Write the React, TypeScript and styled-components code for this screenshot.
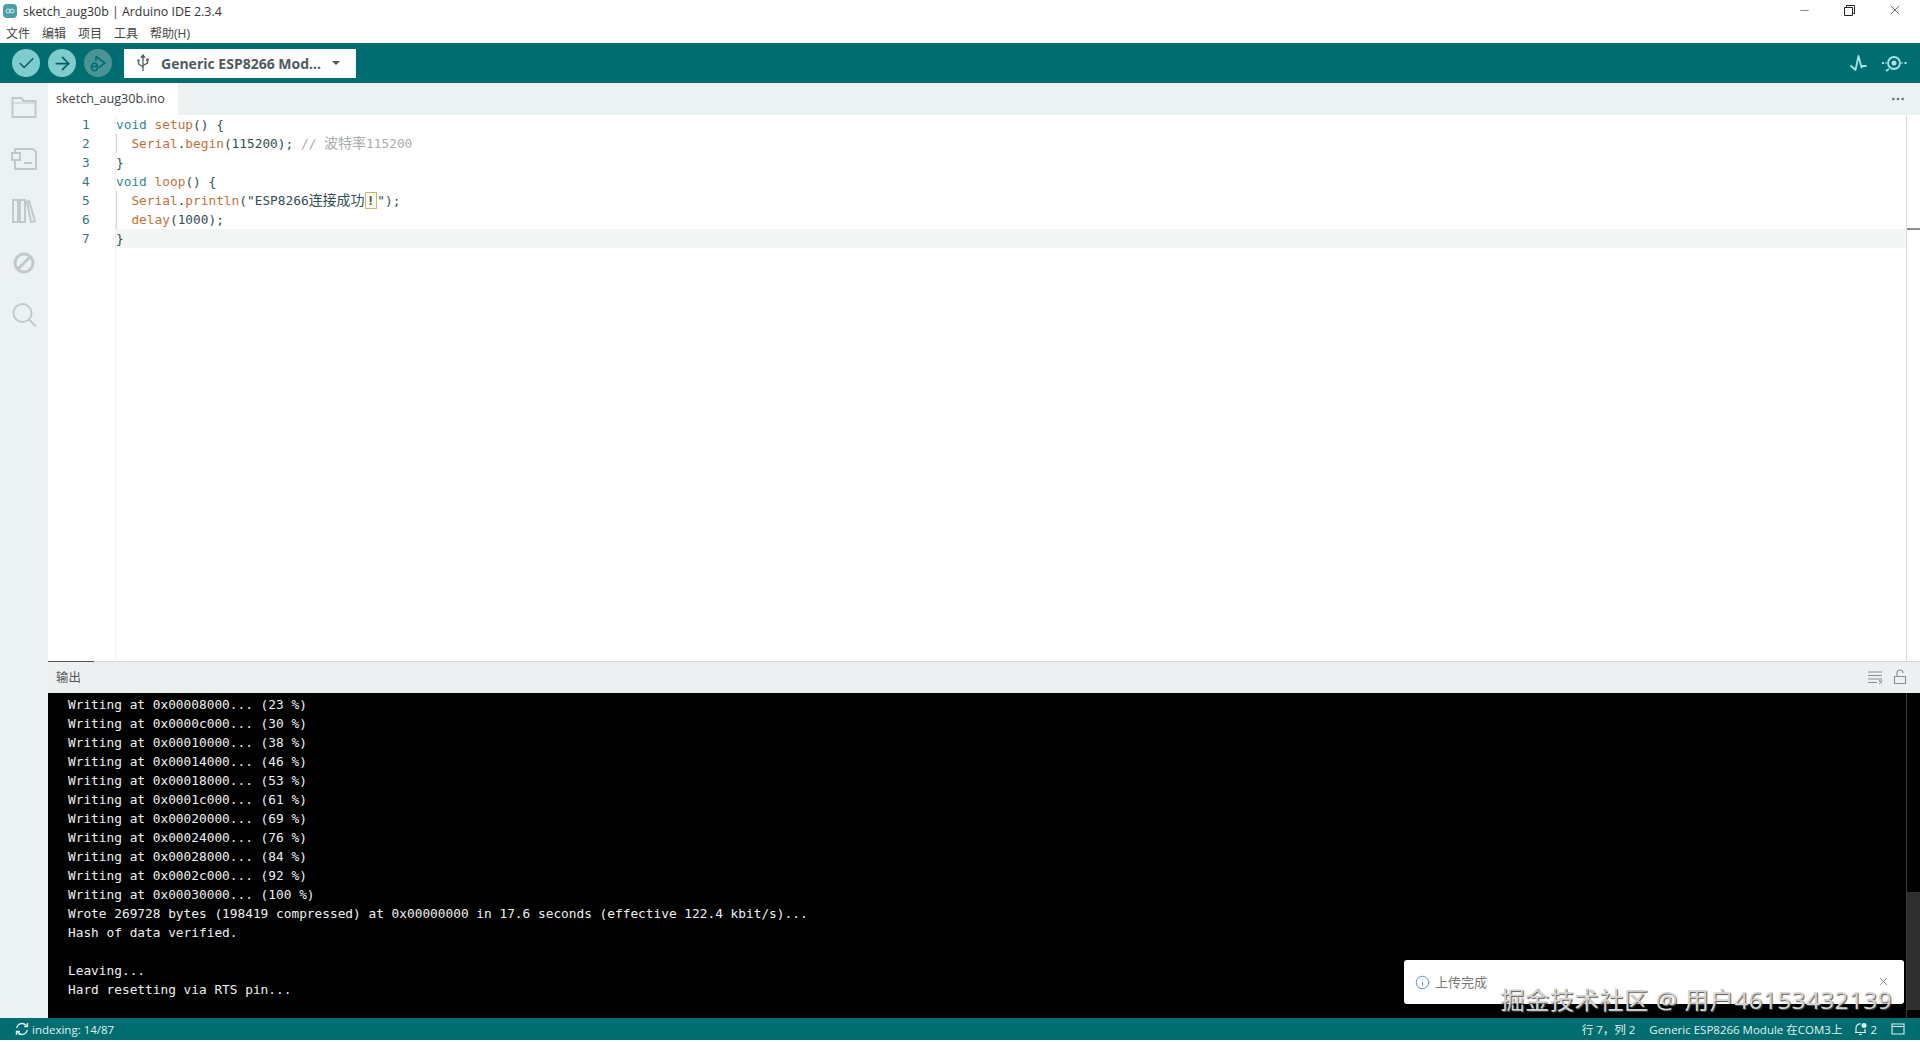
import { createGlobalStyle, styled } from "styled-components";
import { Check, ArrowRight, Ellipsis, Minus, X, Info } from "lucide-react";

const mono = `"DejaVu Sans Mono", "Noto Sans CJK SC", monospace`;
const sans = `"Open Sans", "Noto Sans CJK SC", sans-serif`;

const GlobalStyle = createGlobalStyle`
  html, body {
    margin: 0;
    padding: 0;
    height: 100%;
    background: #fff;
    overflow: hidden;
  }
  #root { height: 100%; }
`;

const Page = styled.div`
  width: 1920px;
  height: 1042px;
  display: flex;
  flex-direction: column;
  font-family: ${sans};
  color: #2b2b2b;
  background: #fff;
`;

const TitleBar = styled.div`
  height: 22px;
  display: flex;
  align-items: center;
  padding-left: 3px;
  font-size: 12.4px;
  color: #333;
`;

const AppIcon = styled.span`
  width: 14px;
  height: 14px;
  border-radius: 4px;
  background: #4d9ea3;
  margin-right: 6px;
  display: flex;
  align-items: center;
  justify-content: center;
`;

const TitleText = styled.span`
  flex: 1;
`;

const WindowButtons = styled.div`
  display: flex;
  align-items: center;
  margin-top: -2px;
  padding-right: 3px;
`;

const WindowButton = styled.span`
  width: 45px;
  height: 20px;
  display: flex;
  align-items: center;
  justify-content: center;
  color: #222;
`;

const MenuBar = styled.div`
  height: 21px;
  display: flex;
  align-items: center;
  gap: 12px;
  padding-left: 6px;
  font-size: 12px;
  color: #444;
`;

const Toolbar = styled.div`
  height: 40px;
  background: #006d70;
  display: flex;
  align-items: center;
  padding-left: 12px;
`;

const RoundButton = styled.span<{ $dim?: boolean }>`
  width: 28px;
  height: 28px;
  border-radius: 50%;
  margin-right: 8px;
  background: ${(p) => (p.$dim ? "#4a9397" : "#7fcbcd")};
  color: ${(p) => (p.$dim ? "#006d70" : "#075e61")};
  display: flex;
  align-items: center;
  justify-content: center;
`;

const BoardSelect = styled.div`
  width: 232px;
  height: 29px;
  margin-left: 4px;
  background: #fff;
  display: flex;
  align-items: center;
  padding-left: 12px;
  box-sizing: border-box;
  color: #4e5b61;
  font-size: 14px;
  font-weight: 700;
`;

const BoardName = styled.span`
  margin-left: 11px;
  width: 171px;
  white-space: nowrap;
`;

const Caret = styled.span`
  width: 0;
  height: 0;
  border-left: 4px solid transparent;
  border-right: 4px solid transparent;
  border-top: 4px solid #4e5b61;
`;

const ToolbarEnd = styled.div`
  margin-left: auto;
  display: flex;
  align-items: center;
  gap: 12px;
  padding-right: 13px;
  color: #a6e4e6;
`;

const Workspace = styled.div`
  flex: 1;
  display: flex;
  min-height: 0;
`;

const SideBar = styled.div`
  width: 48px;
  background: #ecf1f1;
  display: flex;
  flex-direction: column;
  align-items: center;
  gap: 28px;
  padding-top: 12px;
  box-sizing: border-box;
  color: #c3c9c9;

  svg {
    display: block;
    height: 24px;
  }
`;

const Main = styled.div`
  flex: 1;
  min-width: 0;
  display: flex;
  flex-direction: column;
`;

const TabStrip = styled.div`
  height: 32px;
  background: #ecf1f1;
  display: flex;
  align-items: stretch;
  justify-content: space-between;
`;

const Tab = styled.div`
  width: 130px;
  padding: 0 0 2px 8px;
  box-sizing: border-box;
  background: #fff;
  display: flex;
  align-items: center;
  font-size: 12.6px;
  color: #3a3f42;
`;

const TabMore = styled.span`
  display: flex;
  align-items: center;
  padding-right: 14px;
  color: #6b7173;
`;

const Editor = styled.div`
  height: 546px;
  position: relative;
  display: flex;
  font-family: ${mono};
  font-size: 12.8px;
  line-height: 19px;
`;

const Gutter = styled.div`
  width: 67px;
  flex: none;
  border-right: 1px solid #eef1f1;
`;

const LineNo = styled.div`
  height: 19px;
  padding-left: 34px;
  color: #39757a;
  white-space: pre;
`;

const Code = styled.div`
  flex: 1;
  min-width: 0;
`;

const CodeLine = styled.div<{ $current?: boolean }>`
  height: 19px;
  white-space: pre;
  color: #2f4f52;
  background: ${(p) => (p.$current ? "#f4f6f6" : "transparent")};
`;

const Indent = styled.span`
  display: inline-block;
  width: 15.4px;
  height: 19px;
  vertical-align: top;
  box-shadow: inset 1px 0 0 #d5d9d9;
`;

const Kw = styled.span`
  color: #2f8a90;
`;
const Fn = styled.span`
  color: #c2703a;
`;
const Comment = styled.span`
  color: #a8acac;
`;
const Cjk = styled.span`
  font-size: 14px;
`;
const Bracket = styled.span`
  display: inline-block;
  height: 17px;
  line-height: 17px;
  box-shadow: inset 0 0 0 1px #c9b86a;
  background: #fbfbef;
  padding: 0 3px 0 2px;
  font-weight: 700;
`;

const Ruler = styled.div`
  width: 13px;
  flex: none;
  border-left: 1px solid #d8dbdb;
  position: relative;
`;

const RulerMark = styled.span`
  position: absolute;
  top: 113px;
  left: 0;
  right: 0;
  height: 2px;
  background: #8b8f90;
`;

const OutputHead = styled.div`
  height: 32px;
  box-sizing: border-box;
  border-top: 1px solid #d3d6d6;
  background: #ecf0f1;
  display: flex;
  align-items: center;
  justify-content: space-between;
  padding: 0 13px 2px 8px;
  font-size: 12.4px;
  color: #555;
  position: relative;
`;

const OutputMark = styled.span`
  position: absolute;
  top: -1px;
  left: 0;
  width: 46px;
  height: 1px;
  background: #555;
`;

const OutputTools = styled.div`
  display: flex;
  align-items: center;
  gap: 10px;
  color: #8a8e8e;
`;

const Console = styled.div`
  height: 325px;
  position: relative;
  background: #000;
  color: #f0f0f0;
  font-family: ${mono};
  font-size: 12.8px;
  line-height: 19px;
  padding: 2px 0 0 20px;
  box-sizing: border-box;
  white-space: pre;
`;

const ConsoleRule = styled.span`
  position: absolute;
  top: 0;
  right: 13px;
  bottom: 0;
  width: 1px;
  background: #3a3a3a;
`;

const ConsoleThumb = styled.span`
  position: absolute;
  right: 0;
  width: 13px;
  top: 199px;
  height: 118px;
  background: #2f2f2f;
`;

const Toast = styled.div`
  position: absolute;
  right: 16px;
  top: 267px;
  width: 500px;
  height: 44px;
  border-radius: 3px;
  background: #fff;
  display: flex;
  align-items: center;
  padding: 0 14px 0 11px;
  box-sizing: border-box;
  font-family: ${sans};
  font-size: 13px;
  color: #777;
`;

const ToastText = styled.span`
  flex: 1;
  margin-left: 5px;
`;

const ToastClose = styled.span`
  display: flex;
  margin-bottom: 2px;
  color: #555;
`;

const Watermark = styled.span`
  position: absolute;
  right: 28px;
  top: 291px;
  font-family: ${sans};
  font-size: 24.4px;
  line-height: 32px;
  color: #d4d4d4;
  text-shadow: 1px 1px 1px #555;
  letter-spacing: 0.4px;
`;

const StatusBar = styled.div`
  height: 22px;
  background: #006d70;
  color: #e4f0f0;
  display: flex;
  align-items: center;
  font-size: 11.5px;
  margin-bottom: 2px;
  padding: 0 15px 0 15px;
`;

const StatusLeft = styled.span`
  flex: 1;
  display: flex;
  align-items: center;
  gap: 3px;
`;

const StatusItem = styled.span`
  display: flex;
  align-items: center;
  gap: 3px;
  margin-left: 14px;
`;

const BellItem = styled(StatusItem)`
  margin-left: 12px;
`;

const lines = [
  "Writing at 0x00008000... (23 %)",
  "Writing at 0x0000c000... (30 %)",
  "Writing at 0x00010000... (38 %)",
  "Writing at 0x00014000... (46 %)",
  "Writing at 0x00018000... (53 %)",
  "Writing at 0x0001c000... (61 %)",
  "Writing at 0x00020000... (69 %)",
  "Writing at 0x00024000... (76 %)",
  "Writing at 0x00028000... (84 %)",
  "Writing at 0x0002c000... (92 %)",
  "Writing at 0x00030000... (100 %)",
  "Wrote 269728 bytes (198419 compressed) at 0x00000000 in 17.6 seconds (effective 122.4 kbit/s)...",
  "Hash of data verified.",
  " ",
  "Leaving...",
  "Hard resetting via RTS pin...",
];

function FolderIcon() {
  return (
    <svg width="26" height="24" viewBox="0 0 26 24" fill="none" stroke="currentColor" strokeWidth="2">
      <path d="M1.500 3h9l2 3h12v16h-23z" />
      <path d="M1.500 8h23" strokeWidth="1" />
    </svg>
  );
}

function BoardIcon() {
  return (
    <svg width="26" height="24" viewBox="0 0 26 24" fill="none" stroke="currentColor" strokeWidth="2">
      <path d="M4 6V2h18l3 3v17H4v-9" />
      <path d="M1 6h8v7H1z" />
      <path d="M13 16h8" />
    </svg>
  );
}

function LibraryIcon() {
  return (
    <svg width="26" height="24" viewBox="0 0 26 24" fill="none" stroke="currentColor" strokeWidth="2">
      <path d="M2 1h5v22H2zM9 1h5v22H9zM16 3l2-1 6 20-4 1z" />
    </svg>
  );
}

function NoEntryIcon() {
  return (
    <svg width="24" height="24" viewBox="0 0 24 24" fill="none" stroke="currentColor" strokeWidth="3">
      <circle cx="12" cy="12" r="9" />
      <path d="M6 18 18 6" />
    </svg>
  );
}

function SearchIcon() {
  return (
    <svg width="25" height="24" viewBox="0 0 25 24" fill="none" stroke="currentColor" strokeWidth="2">
      <circle cx="10.500" cy="10" r="9" />
      <path d="m17 16.500 7 7" />
    </svg>
  );
}

function UsbIcon() {
  return (
    <svg width="14" height="18" viewBox="0 0 14 18" fill="none" stroke="currentColor" strokeWidth="1.300">
      <path d="M7 1v16" />
      <path d="M5.500 3 7 1l1.500 2z" fill="currentColor" />
      <path d="M7 13 2.500 10V7.500M7 11.500l4.500-2.500V6.500" />
      <circle cx="2.500" cy="6.500" r="1.200" fill="currentColor" stroke="none" />
      <path d="M10.300 4.500h2.400v2.400h-2.400z" fill="currentColor" stroke="none" />
    </svg>
  );
}

function DebugIcon() {
  return (
    <svg width="22" height="22" viewBox="0 0 22 22" fill="none" stroke="currentColor" strokeWidth="1.600">
      <path d="M9 4.500 18 11l-6 4.500" />
      <path d="M9 4.500V9" />
      <ellipse cx="7.500" cy="15" rx="3" ry="3.800" />
      <path d="M4.500 14.500h6" />
    </svg>
  );
}

function PlotterIcon() {
  return (
    <svg width="20" height="20" viewBox="0 0 20 20" fill="none" stroke="currentColor" strokeWidth="1.800" strokeLinejoin="round">
      <path d="M1.500 12.500 6.500 17l3-14 3 11.500 1-1.500h4" />
    </svg>
  );
}

function MonitorIcon() {
  return (
    <svg width="26" height="20" viewBox="0 0 26 20" fill="none" stroke="currentColor" strokeWidth="1.800">
      <circle cx="13" cy="10" r="6" />
      <circle cx="13" cy="10" r="1.600" fill="currentColor" />
      <path d="M8 16 5 18" />
      <path d="M1 10h2M4.500 10h1M20.500 10h1M23.500 10h2" strokeDasharray="2 2" />
    </svg>
  );
}

function ClearIcon() {
  return (
    <svg width="16" height="14" viewBox="0 0 16 14" fill="none" stroke="currentColor" strokeWidth="1.100">
      <path d="M1 2h14M1 5.500h14M1 9h14M1 12.500h9M12 10.500l3 3M15 10.500l-3 3" />
    </svg>
  );
}

function LockIcon() {
  return (
    <svg width="14" height="16" viewBox="0 0 14 16" fill="none" stroke="currentColor" strokeWidth="1.100">
      <path d="M1.500 7.500h11v7h-11z" />
      <path d="M4 7.500V4a3 3 0 0 1 6 0" />
    </svg>
  );
}

function SyncIcon() {
  return (
    <svg width="14" height="14" viewBox="0 0 14 14" fill="none" stroke="currentColor" strokeWidth="1.400">
      <path d="M1.800 6A5.300 5.300 0 0 1 11.500 4" />
      <path d="M12.200 8A5.300 5.300 0 0 1 2.500 10" />
      <path d="M12.500 1v3.500H9M1.500 13V9.500H5" />
    </svg>
  );
}

function BellIcon() {
  return (
    <svg width="13" height="14" viewBox="0 0 13 14" fill="none" stroke="currentColor" strokeWidth="1.200">
      <path d="M2 10V6a4 4 0 0 1 5-4M1 10.500h11M5 12.500h3M11 7v3" />
      <circle cx="10" cy="3.500" r="2.500" fill="currentColor" stroke="none" />
    </svg>
  );
}

function PanelIcon() {
  return (
    <svg width="14" height="12" viewBox="0 0 14 12" fill="none" stroke="currentColor" strokeWidth="1.100">
      <path d="M1 1h12v10H1zM1 3.500h12" />
    </svg>
  );
}

function InfinityIcon() {
  return (
    <svg width="10" height="6" viewBox="0 0 10 6" fill="none" stroke="#d5f0f0" strokeWidth="1">
      <circle cx="3" cy="3" r="2" />
      <circle cx="7" cy="3" r="2" />
    </svg>
  );
}

export default function App() {
  return (
    <Page>
      <GlobalStyle />
      <TitleBar>
        <AppIcon>
          <InfinityIcon />
        </AppIcon>
        <TitleText>sketch_aug30b | Arduino IDE 2.3.4</TitleText>
        <WindowButtons>
          <WindowButton>
            <Minus size={13} strokeWidth={1} />
          </WindowButton>
          <WindowButton>
            <svg width="11" height="11" viewBox="0 0 11 11" fill="none" stroke="currentColor">
              <path d="M.5 2.500h8v8h-8zM2.500 2.500v-2h8v8h-2" />
            </svg>
          </WindowButton>
          <WindowButton>
            <X size={16} strokeWidth={1} />
          </WindowButton>
        </WindowButtons>
      </TitleBar>
      <MenuBar>
        <span>文件</span>
        <span>编辑</span>
        <span>项目</span>
        <span>工具</span>
        <span>帮助(H)</span>
      </MenuBar>
      <Toolbar>
        <RoundButton>
          <Check size={19} strokeWidth={2} />
        </RoundButton>
        <RoundButton>
          <ArrowRight size={21} strokeWidth={2} />
        </RoundButton>
        <RoundButton $dim>
          <DebugIcon />
        </RoundButton>
        <BoardSelect>
          <UsbIcon />
          <BoardName>Generic ESP8266 Mod...</BoardName>
          <Caret />
        </BoardSelect>
        <ToolbarEnd>
          <PlotterIcon />
          <MonitorIcon />
        </ToolbarEnd>
      </Toolbar>
      <Workspace>
        <SideBar>
          <FolderIcon />
          <BoardIcon />
          <LibraryIcon />
          <NoEntryIcon />
          <SearchIcon />
        </SideBar>
        <Main>
          <TabStrip>
            <Tab>sketch_aug30b.ino</Tab>
            <TabMore>
              <Ellipsis size={16} />
            </TabMore>
          </TabStrip>
          <Editor>
            <Gutter>
              {[1, 2, 3, 4, 5, 6, 7].map((n) => (
                <LineNo key={n}>{n}</LineNo>
              ))}
            </Gutter>
            <Code>
              <CodeLine>
                <Kw>void</Kw> <Fn>setup</Fn>() {"{"}
              </CodeLine>
              <CodeLine>
                <Indent />
                <Fn>Serial</Fn>.<Fn>begin</Fn>(115200);{" "}
                <Comment>
                  // <Cjk>波特率</Cjk>115200
                </Comment>
              </CodeLine>
              <CodeLine>{"}"}</CodeLine>
              <CodeLine>
                <Kw>void</Kw> <Fn>loop</Fn>() {"{"}
              </CodeLine>
              <CodeLine>
                <Indent />
                <Fn>Serial</Fn>.<Fn>println</Fn>("ESP8266<Cjk>连接成功</Cjk>
                <Bracket>!</Bracket>");
              </CodeLine>
              <CodeLine>
                <Indent />
                <Fn>delay</Fn>(1000);
              </CodeLine>
              <CodeLine $current>{"}"}</CodeLine>
            </Code>
            <Ruler>
              <RulerMark />
            </Ruler>
          </Editor>
          <OutputHead>
            <OutputMark />
            <span>输出</span>
            <OutputTools>
              <ClearIcon />
              <LockIcon />
            </OutputTools>
          </OutputHead>
          <Console>
            {lines.join("\n")}
            <ConsoleRule />
            <ConsoleThumb />
            <Toast>
              <Info size={15} color="#4a90d0" strokeWidth={1.5} />
              <ToastText>上传完成</ToastText>
              <ToastClose>
                <X size={13} strokeWidth={1.2} />
              </ToastClose>
            </Toast>
            <Watermark>掘金技术社区 @ 用户46153432139</Watermark>
          </Console>
        </Main>
      </Workspace>
      <StatusBar>
        <StatusLeft>
          <SyncIcon />
          indexing: 14/87
        </StatusLeft>
        <StatusItem>行 7，列 2</StatusItem>
        <StatusItem>Generic ESP8266 Module 在COM3上</StatusItem>
        <BellItem>
          <BellIcon />2
        </BellItem>
        <StatusItem>
          <PanelIcon />
        </StatusItem>
      </StatusBar>
    </Page>
  );
}
